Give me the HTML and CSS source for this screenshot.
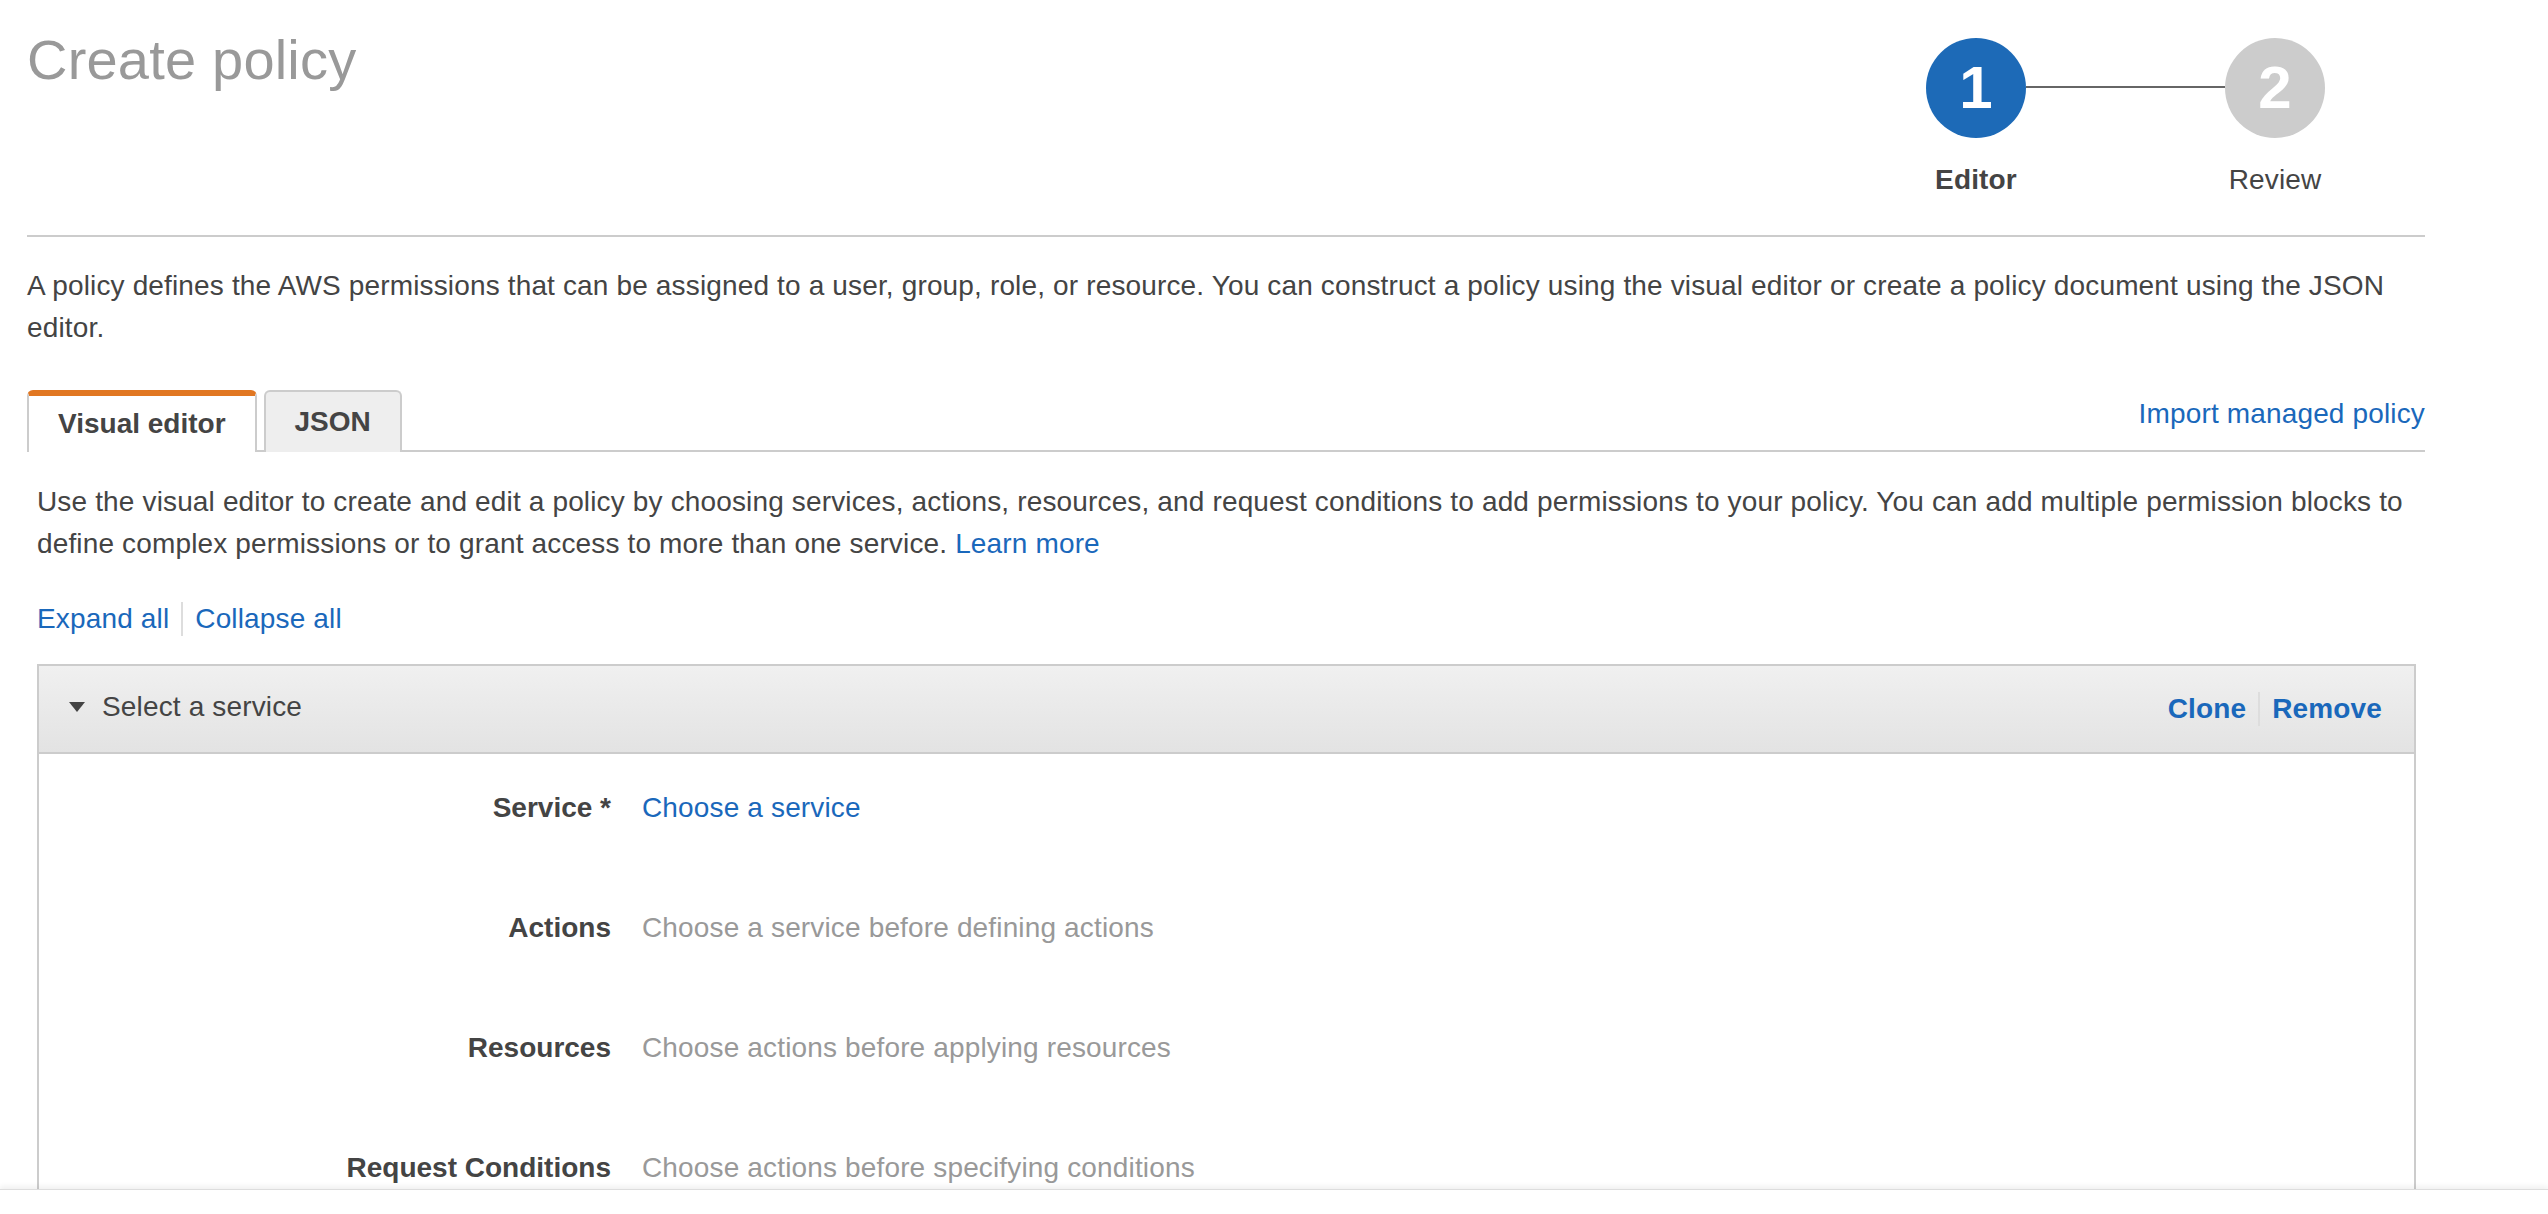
FILE: index.html
```html
<!DOCTYPE html>
<html lang="en">
<head>
<meta charset="utf-8">
<title>Create policy</title>
<link rel="stylesheet" href="styles.css">
</head>
<body>
<div class="page">
  <header class="header">
    <h1 class="title">Create policy</h1>
    <div class="stepper">
      <div class="step">
        <div class="circle active">1</div>
        <div class="step-label current">Editor</div>
      </div>
      <div class="step-line"></div>
      <div class="step">
        <div class="circle">2</div>
        <div class="step-label">Review</div>
      </div>
    </div>
  </header>

  <p class="intro">A policy defines the AWS permissions that can be assigned to a user, group, role, or resource. You can construct a policy using the visual editor or create a policy document using the JSON editor.</p>

  <div class="tabbar">
    <div class="tabs">
      <div class="tab selected">Visual editor</div>
      <div class="tab">JSON</div>
    </div>
    <a class="link import">Import managed policy</a>
  </div>

  <div class="content">
    <p class="help"><span>Use the visual editor to create and edit a policy by choosing services, actions, resources, and request conditions to add permissions to your policy. You can add multiple permission blocks to define complex permissions or to grant access to more than one service.</span> <a class="link">Learn more</a></p>

    <div class="expand-row">
      <a class="link">Expand all</a>
      <span class="sep"></span>
      <a class="link">Collapse all</a>
    </div>

    <section class="panel">
      <div class="panel-head">
        <div class="panel-title"><span class="caret"></span>Select a service</div>
        <div class="panel-actions">
          <a class="link strong">Clone</a>
          <span class="sep"></span>
          <a class="link strong">Remove</a>
        </div>
      </div>
      <div class="panel-body">
        <div class="label">Service *</div>
        <div class="value"><a class="link">Choose a service</a></div>
        <div class="label">Actions</div>
        <div class="value muted">Choose a service before defining actions</div>
        <div class="label">Resources</div>
        <div class="value muted">Choose actions before applying resources</div>
        <div class="label">Request Conditions</div>
        <div class="value muted">Choose actions before specifying conditions</div>
      </div>
    </section>
  </div>
</div>
<div class="footer"></div>
</body>
</html>
```

FILE: styles.css
```css
* { box-sizing: border-box; }

html, body {
  margin: 0;
  padding: 0;
  background: #fff;
}

body {
  font-family: "Liberation Sans", Arial, Helvetica, sans-serif;
  font-size: 28px;
  line-height: 42px;
  letter-spacing: 0.15px;
  color: #444;
  overflow: hidden;
}

.page {
  width: 2398px;
  margin-left: 27px;
}

.header {
  height: 237px;
  border-bottom: 2px solid #ccc;
  display: flex;
  justify-content: space-between;
  align-items: flex-start;
}

.title {
  margin: 28px 0 0 0;
  font-size: 56px;
  line-height: 64px;
  font-weight: normal;
  letter-spacing: 0.2px;
  color: #999;
}

.stepper {
  display: flex;
  align-items: flex-start;
  margin-top: 38px;
  margin-right: 100px;
}

.step {
  width: 100px;
  display: flex;
  flex-direction: column;
  align-items: center;
}

.circle {
  width: 100px;
  height: 100px;
  border-radius: 50%;
  background: #ccc;
  color: #fff;
  font-weight: bold;
  font-size: 60px;
  line-height: 100px;
  text-align: center;
}

.circle.active {
  background: #1d6ab7;
}

.step-line {
  width: 199px;
  height: 2px;
  background: #666;
  margin-top: 48px;
}

.step-label {
  margin-top: 22px;
  line-height: 40px;
  white-space: nowrap;
  color: #444;
}

.step-label.current {
  font-weight: bold;
}

.intro {
  margin: 28px 0 0 0;
}

.tabbar {
  margin-top: 41px;
  height: 62px;
  border-bottom: 2px solid #ccc;
  display: flex;
  justify-content: space-between;
  align-items: flex-start;
}

.tabs {
  display: flex;
  gap: 7px;
  height: 60px;
}

.tab {
  height: 62px;
  padding: 0 29px;
  border: 2px solid #ccc;
  border-bottom: none;
  border-radius: 6px 6px 0 0;
  background: #eee;
  font-weight: bold;
  letter-spacing: 0;
  line-height: 60px;
  color: #444;
}

.tab.selected {
  background: #fff;
  border-top: 6px solid #e17722;
  line-height: 56px;
}

.link {
  color: #1a68bb;
  text-decoration: none;
  cursor: pointer;
}

.link.strong {
  font-weight: bold;
}

.import {
  margin-top: 3px;
  line-height: 42px;
}

.content {
  padding: 0 9px 0 10px;
}

.help {
  margin: 29px 0 0 0;
}

.expand-row {
  margin-top: 34px;
  height: 40px;
  display: flex;
  align-items: center;
  line-height: 40px;
}

.sep {
  display: inline-block;
  width: 2px;
  height: 34px;
  background: #ddd;
  margin: 0 12px;
}

.panel {
  margin-top: 25px;
  border: 2px solid #ccc;
  border-bottom: none;
  height: 700px;
}

.panel-head {
  height: 88px;
  background: linear-gradient(#f0f0f0, #e3e3e3);
  border-bottom: 2px solid #ccc;
  display: flex;
  justify-content: space-between;
  align-items: center;
  padding: 0 32px 0 30px;
}

.panel-title {
  display: flex;
  align-items: center;
  margin-top: -4px;
}

.caret {
  width: 0;
  height: 0;
  border-left: 8px solid transparent;
  border-right: 8px solid transparent;
  border-top: 10px solid #444;
  margin-right: 17px;
}

.panel-actions {
  display: flex;
  align-items: center;
}

.panel-actions .sep {
  height: 34px;
  margin: 0 12px;
}

.panel-body {
  display: grid;
  grid-template-columns: 572px 1fr;
  column-gap: 31px;
  row-gap: 80px;
  padding-top: 34px;
  line-height: 40px;
}

.label {
  text-align: right;
  font-weight: bold;
  letter-spacing: 0;
  color: #444;
}

.value.muted {
  color: #999;
}

.footer {
  position: fixed;
  left: 0;
  right: 0;
  bottom: 0;
  height: 25px;
  background: #fff;
  border-top: 1px solid #ddd;
  box-shadow: 0 -3px 5px rgba(0, 0, 0, 0.06);
}
```
